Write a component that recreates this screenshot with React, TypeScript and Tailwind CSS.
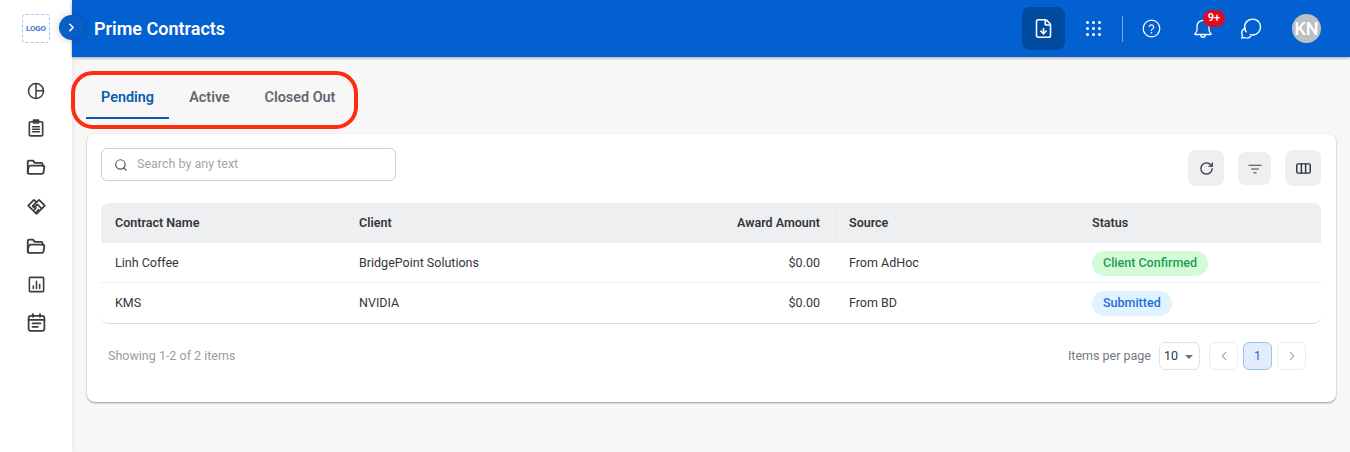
import { ChevronLeft, ChevronRight, FileDown, RotateCw, Search } from "lucide-react";

const rows = [
  { name: "Linh Coffee", client: "BridgePoint Solutions", amount: "$0.00", source: "From AdHoc", status: "Client Confirmed", tone: "bg-[#d3fbd8] text-[#1f9d4d]" },
  { name: "KMS", client: "NVIDIA", amount: "$0.00", source: "From BD", status: "Submitted", tone: "bg-[#e1f3fe] text-[#1d6fd8]" }
];

const Svg = ({ children, size = 20 }: { children: React.ReactNode; size?: number }) => (
  <svg width={size} height={size} viewBox="0 0 24 24" fill="none" stroke="currentColor" strokeWidth="2" strokeLinecap="round" strokeLinejoin="round">
    {children}
  </svg>
);

const FolderIcon = () => (
  <Svg size={22}>
    <path d="M3 18V6.500A1.500 1.500 0 0 1 4.500 5h4.200l2 2.500h7A1.500 1.500 0 0 1 19.200 9v1.500" />
    <path d="M3 18.500c.3-4 .9-8 3-8h13.500c1.200 0 1.700.8 1.500 2l-.8 5.500c-.2 1-.8 1.500-1.700 1.500H4.500A1.500 1.500 0 0 1 3 18.500Z" />
  </Svg>
);

const sideIcons = [
  <Svg key="pie" size={18}>
    <circle cx="12" cy="12" r="10" />
    <path d="M12 2v20M12 11.500h10" />
  </Svg>,
  <Svg key="clip" size={20}>
    <rect x="4" y="4.500" width="16" height="17" rx="1.500" />
    <path d="M9 2.500h6v3.500H9zM8 10.500h8M8 13.500h8M8 16.500h8" />
  </Svg>,
  <FolderIcon key="f1" />,
  <Svg key="hand" size={21}>
    <path d="M15 4.500 21.500 11 12 20.500 2.500 11 9 4.500l3 2.500Z" />
    <path d="m12 7-4.500 4.500 1.500 1.500 4-3.500 4.500 4.500M9.500 15.500l2-2M12 18l2.500-2.500" />
  </Svg>,
  <FolderIcon key="f2" />,
  <Svg key="chart" size={19}>
    <rect x="3" y="3" width="18" height="18" rx="1" />
    <path d="M8 17v-3M12 17V8M16 17v-5" />
  </Svg>,
  <Svg key="cal" size={21}>
    <rect x="3" y="4.500" width="18" height="17" rx="2.500" />
    <path d="M3 9h18M8 2.500v3M16 2.500v3M7.500 13h9M7.500 17h6" strokeWidth="2.200" />
  </Svg>
];

const App = () => {
  return (
    <div className="relative flex h-[452px] w-[1350px] overflow-hidden bg-[#f7f7f8] font-['Roboto',sans-serif]">
      {/* Sidebar */}
      <aside className="flex w-[72px] shrink-0 flex-col items-center bg-white pt-[14px] shadow-[1px_0_6px_rgba(0,0,0,0.08)]">
        <div className="flex h-[29px] w-[28px] items-center justify-center rounded-[4px] border border-dashed border-[#a9c0f0] text-[8px] font-bold tracking-[-0.2px] text-[#3f6fd6]">
          LOGO
        </div>
        <div className="mt-[39px] flex flex-col items-center gap-[18px] text-[#3a3d42]">
          {sideIcons}
        </div>
      </aside>

      <div className="flex min-w-0 flex-1 flex-col">
        {/* Header */}
        <header className="flex h-[57px] shrink-0 items-center justify-between bg-[#0360d0] pl-[22px] pr-[29px] shadow-[0_1px_3px_rgba(0,0,0,0.35)]">
          <h1 className="text-[18px] font-semibold text-white">Prime Contracts</h1>
          <div className="flex items-center text-white">
            <button className="flex h-[43px] w-[43px] items-center justify-center rounded-[8px] bg-[#004a9f]">
              <FileDown size={21} strokeWidth={1.8} />
            </button>
            <div className="ml-[21px] grid grid-cols-3 gap-[3px]">
              {[...Array(9)].map((_, i) => (
                <span key={i} className="h-[3px] w-[3px] rounded-full bg-white" />
              ))}
            </div>
            <div className="ml-[21px] h-[26px] w-px bg-[#7fa9de]" />
            <div className="ml-[19px]">
              <Svg size={19}>
                <circle cx="12" cy="12" r="10.500" strokeWidth="1.500" />
                <path d="M9.200 9.300a2.900 2.900 0 0 1 5.600 1c0 2-2.800 2.300-2.800 4" strokeWidth="1.500" />
                <path d="M12 17.500h.01" strokeWidth="2" />
              </Svg>
            </div>
            <div className="relative ml-[31px]">
              <Svg size={22}>
                <path d="M12 2.500a6.500 6.500 0 0 0-6.500 6.500v3.500c0 2-.7 3.300-2.300 4.500-.4.5 0 1 .5 1h16.600c.5 0 .9-.5.5-1-1.600-1.200-2.300-2.500-2.300-4.500V9A6.500 6.500 0 0 0 12 2.500Z" strokeWidth="1.400" />
                <path d="M9.500 18.500a2.500 2.500 0 0 0 5 0" strokeWidth="1.400" />
              </Svg>
              <span className="absolute left-[11px] top-[-8px] flex h-[17px] w-[22px] items-center justify-center rounded-full bg-[#dd0a1e] text-[11px] font-semibold text-white">
                9+
              </span>
            </div>
            <div className="ml-[25px]">
              <Svg size={23}>
                <path d="M7.500 15.500A8.300 8.300 0 1 1 14 18.800c-.8 0-1.500-.1-2.200-.3" strokeWidth="1.400" />
                <path d="M6.500 12a5 5 0 0 0-3.500 5.500c0 .8.200 1.500.5 2L2.800 22l3-.6c2.300 1 5 .7 6.500-1.500" strokeWidth="1.400" />
              </Svg>
            </div>
            <div className="ml-[30px] flex h-[29px] w-[29px] items-center justify-center rounded-full bg-[#bcbfc4] text-[18px] font-medium text-white">
              KN
            </div>
          </div>
        </header>

        <main className="flex-1 pl-[15px] pr-[14px]">
          {/* Tabs */}
          <div className="-ml-px flex h-[62px] items-end text-[14.400px] font-semibold">
            <button className="flex h-[42px] w-[83px] items-start justify-center border-b-2 border-[#0b5cb0] pt-[10px] text-[#0b5cb0]">Pending</button>
            <button className="flex h-[42px] w-[81px] items-start justify-center pt-[10px] text-[#63676d]">Active</button>
            <button className="flex h-[42px] w-[100px] items-start justify-center pt-[10px] text-[#63676d]">Closed Out</button>
          </div>

          {/* Card */}
          <section className="mt-[15px] h-[268px] rounded-[8px] bg-white pl-[14px] pr-[15px] pt-[14px] shadow-[0_1px_2px_rgba(0,0,0,0.4)]">
            <div className="flex h-[55px] items-start justify-between">
              <div className="flex h-[33px] w-[295px] items-center rounded-[6px] border border-[#cfd1d4] pl-[12px]">
                <Search size={14} strokeWidth={2} className="text-[#55585d]" />
                <span className="ml-[9px] text-[12.500px] text-[#a3a6ab]">Search by any text</span>
              </div>
              <div className="flex items-start">
                <button className="mt-[2px] flex h-[36px] w-[36px] items-center justify-center rounded-[8px] bg-[#eeeff1] text-[#2e3136]">
                  <RotateCw size={15} strokeWidth={2} />
                </button>
                <button className="ml-[14px] mt-[4px] flex h-[33px] w-[33px] items-center justify-center rounded-[8px] bg-[#eeeff1] text-[#3a3d42]">
                  <Svg size={18}>
                    <path d="M4 7h16M7.500 12h9M10.500 17h3" strokeWidth="1.600" />
                  </Svg>
                </button>
                <button className="ml-[14px] mt-[2px] flex h-[36px] w-[36px] items-center justify-center rounded-[8px] bg-[#eeeff1] text-[#2e3136]">
                  <Svg size={17}>
                    <rect x="2.500" y="5.500" width="19" height="13" rx="2" />
                    <path d="M9 5.500v13M15 5.500v13" />
                  </Svg>
                </button>
              </div>
            </div>

            <table className="w-[1220px] table-fixed border-separate border-spacing-0 text-[12.500px] text-[#33363b]">
              <colgroup>
                <col className="w-[244px]" />
                <col className="w-[245px]" />
                <col className="w-[245px]" />
                <col className="w-[243px]" />
                <col className="w-[243px]" />
              </colgroup>
              <thead>
                <tr className="h-[40px] bg-[#eeeff1] text-left">
                  <th className="rounded-tl-[8px] pl-[14px] font-semibold">Contract Name</th>
                  <th className="border-l border-[#e9eaec] pl-[13px] font-semibold">Client</th>
                  <th className="border-l border-[#e9eaec] pr-[15px] text-right font-semibold">Award Amount</th>
                  <th className="border-l border-[#e9eaec] pl-[13px] font-semibold">Source</th>
                  <th className="rounded-tr-[8px] border-l border-[#e9eaec] pl-[13px] font-semibold">Status</th>
                </tr>
              </thead>
              <tbody>
                {rows.map((row, index) => {
                  const last = index === rows.length - 1;
                  const line = last ? "border-b border-[#d9dbe0]" : "border-b border-[#eceef0] pt-[2px]";
                  return (
                    <tr key={row.name} className={last ? "h-[41px]" : "h-[40px]"}>
                      <td className={`pl-[14px] ${line} ${last ? "rounded-bl-[8px]" : ""}`}>{row.name}</td>
                      <td className={`pl-[14px] ${line}`}>{row.client}</td>
                      <td className={`pr-[15px] text-right ${line}`}>{row.amount}</td>
                      <td className={`pl-[14px] ${line}`}>{row.source}</td>
                      <td className={`pl-[14px] ${line} ${last ? "rounded-br-[8px]" : ""}`}>
                        <span className={`inline-flex h-[25px] items-center rounded-full px-[11px] font-medium ${row.tone}`}>{row.status}</span>
                      </td>
                    </tr>
                  );
                })}
              </tbody>
            </table>

            {/* Pagination */}
            <div className="mt-[18px] flex h-[28px] items-center justify-between pl-[7px] pr-[15px] text-[12.500px]">
              <span className="text-[#9a9da3]">Showing 1-2 of 2 items</span>
              <div className="flex items-center">
                <span className="text-[#75787e]">Items per page</span>
                <div className="ml-[8px] flex h-[28px] w-[41px] items-center rounded-[6px] border border-[#dfe1e4] pl-[4px] text-[#33363b]">
                  10
                  <span className="ml-[7px] mt-[1px] h-0 w-0 border-x-[4px] border-t-[4px] border-x-transparent border-t-[#6b6e73]" />
                </div>
                <button className="ml-[9px] flex h-[28px] w-[29px] items-center justify-center rounded-[6px] border border-[#ebecee] text-[#8d9095]">
                  <ChevronLeft size={14} strokeWidth={1.8} />
                </button>
                <button className="ml-[5px] flex h-[28px] w-[29px] items-center justify-center rounded-[6px] border border-[#9cc2f0] bg-[#e2ecfb] text-[#2a6fd0]">1</button>
                <button className="ml-[5px] flex h-[28px] w-[29px] items-center justify-center rounded-[6px] border border-[#ebecee] text-[#8d9095]">
                  <ChevronRight size={14} strokeWidth={1.8} />
                </button>
              </div>
            </div>
          </section>
        </main>
      </div>

      {/* Sidebar toggle */}
      <button className="absolute left-[59px] top-[15px] flex h-[25px] w-[25px] items-center justify-center rounded-full bg-[#0a5cc8] text-white shadow-[0_0_8px_rgba(0,0,0,0.2)]">
        <ChevronRight size={13} strokeWidth={3} />
      </button>

      {/* Red annotation around the tabs */}
      <div className="pointer-events-none absolute left-[71px] top-[71px] h-[58px] w-[287px] rounded-[22px] border-4 border-[#ff2d0e]" />
    </div>
  );
};

export default App;
